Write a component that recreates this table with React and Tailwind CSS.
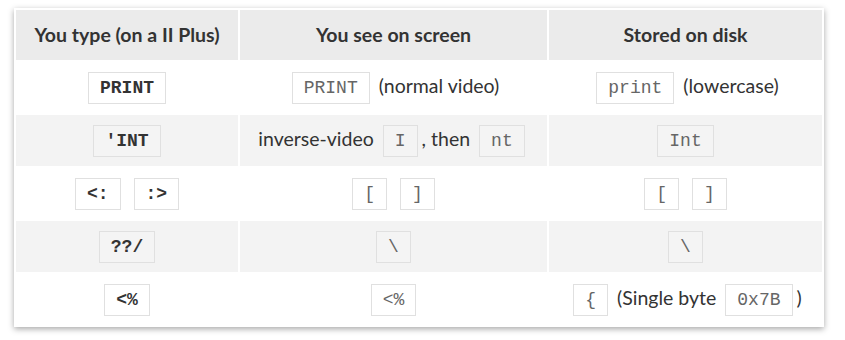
import React from "react";

const sans = { fontFamily: "Lato, 'Noto Sans', sans-serif" };

function Code({ children, bold, gray }) {
  return (
    <code
      className={
        "inline-block mx-[4px] px-[11px] h-[32px] leading-[30px] align-middle border border-[#e0e0e0] text-[18px] " +
        (bold ? "font-bold text-[#333] " : "font-normal text-[#666] ") +
        (gray ? "bg-[#f4f4f4]" : "bg-white")
      }
      style={{ fontFamily: "'Liberation Mono', 'Courier New', monospace" }}
    >
      {children}
    </code>
  );
}

export default function App() {
  const rows = [
    {
      a: <Code bold>PRINT</Code>,
      b: (
        <>
          <Code>PRINT</Code> (normal video)
        </>
      ),
      c: (
        <>
          <Code>print</Code> (lowercase)
        </>
      ),
    },
    {
      a: <Code bold gray>'INT</Code>,
      b: (
        <>
          inverse-video <Code gray>I</Code>, then <Code gray>nt</Code>
        </>
      ),
      c: <Code gray>Int</Code>,
    },
    {
      a: (
        <>
          <Code bold>&lt;:</Code> <Code bold>:&gt;</Code>
        </>
      ),
      b: (
        <>
          <Code>[</Code> <Code>]</Code>
        </>
      ),
      c: (
        <>
          <Code>[</Code> <Code>]</Code>
        </>
      ),
    },
    {
      a: <Code bold gray>??/</Code>,
      b: <Code gray>\</Code>,
      c: <Code gray>\</Code>,
    },
    {
      a: <Code bold>&lt;%</Code>,
      b: <Code>&lt;%</Code>,
      c: (
        <>
          <Code>{"{"}</Code> (Single byte <Code>0x7B</Code>)
        </>
      ),
    },
  ];
  return (
    <div className="bg-white w-[845px] h-[340px] pl-[14px] pt-[8px]" style={sans}>
      <div className="w-[810px] bg-white shadow-[0_2px_6px_rgba(0,0,0,0.35)]">
        <table className="w-full border-separate border-spacing-[2px] text-[19.5px] text-[#333]">
          <thead>
            <tr className="h-[50px] bg-[#ebebeb]">
              <th className="w-[222px] font-bold text-center">You type (on a II Plus)</th>
              <th className="w-[307px] font-bold text-center">You see on screen</th>
              <th className="w-[273px] font-bold text-center">Stored on disk</th>
            </tr>
          </thead>
          <tbody>
            {rows.map((r, i) => (
              <tr key={i} className={"h-[51px] " + (i % 2 === 1 ? "bg-[#f3f3f3]" : "bg-white")}>
                <td className="text-center p-0 whitespace-nowrap">{r.a}</td>
                <td className="text-center p-0 whitespace-nowrap">{r.b}</td>
                <td className="text-center p-0 whitespace-nowrap">{r.c}</td>
              </tr>
            ))}
          </tbody>
        </table>
      </div>
    </div>
  );
}
